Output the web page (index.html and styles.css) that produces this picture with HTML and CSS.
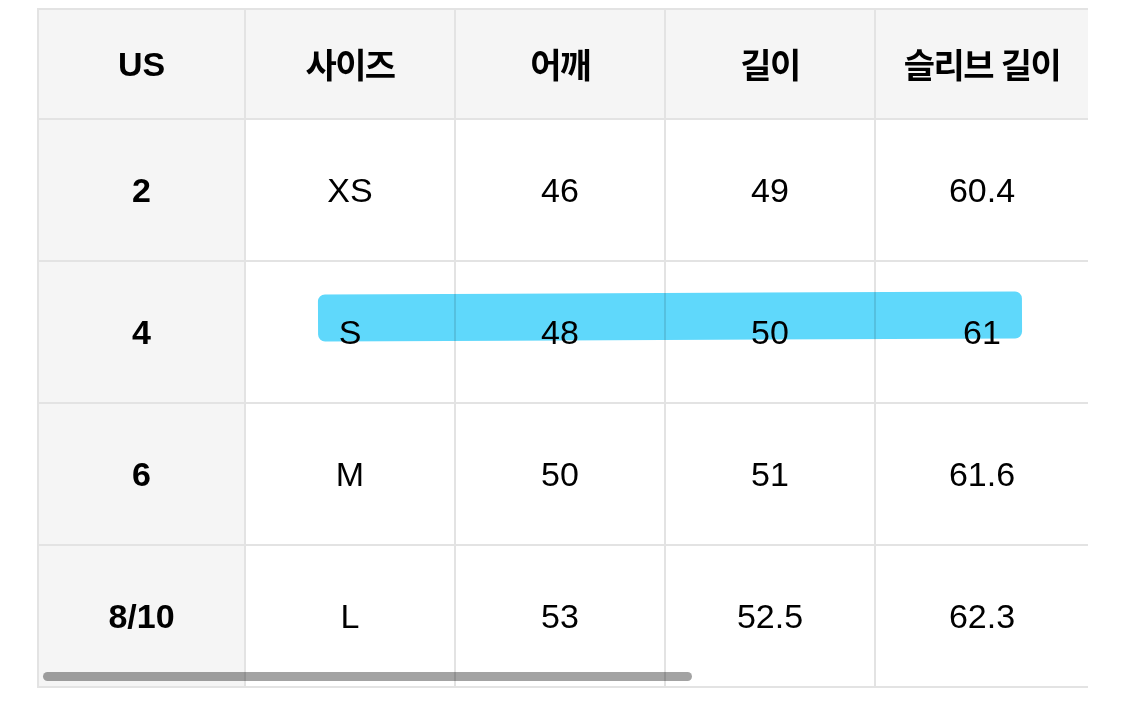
FILE: index.html
```html
<!DOCTYPE html>
<html lang="ko">
<head>
<meta charset="utf-8">
<title>사이즈 표</title>
<link rel="stylesheet" href="styles.css">
</head>
<body>
<div class="page">
  <div class="scroller">
    <div class="grid">
      <div class="cell head first">US</div>
      <div class="cell head"><span class="ko">사이즈</span></div>
      <div class="cell head"><span class="ko">어깨</span></div>
      <div class="cell head"><span class="ko">길이</span></div>
      <div class="cell head"><span class="ko">슬리브 길이</span></div>
      <div class="cell head"></div>
      <div class="cell head"></div>
      <div class="cell head"></div>

      <div class="cell first">2</div>
      <div class="cell">XS</div>
      <div class="cell">46</div>
      <div class="cell">49</div>
      <div class="cell">60.4</div>
      <div class="cell"></div>
      <div class="cell"></div>
      <div class="cell"></div>

      <div class="cell first">4</div>
      <div class="cell">S</div>
      <div class="cell">48</div>
      <div class="cell">50</div>
      <div class="cell">61</div>
      <div class="cell"></div>
      <div class="cell"></div>
      <div class="cell"></div>

      <div class="cell first">6</div>
      <div class="cell">M</div>
      <div class="cell">50</div>
      <div class="cell">51</div>
      <div class="cell">61.6</div>
      <div class="cell"></div>
      <div class="cell"></div>
      <div class="cell"></div>

      <div class="cell first">8/10</div>
      <div class="cell">L</div>
      <div class="cell">53</div>
      <div class="cell">52.5</div>
      <div class="cell">62.3</div>
      <div class="cell"></div>
      <div class="cell"></div>
      <div class="cell"></div>
    </div>
    <div class="thumb"></div>
  </div>
  <div class="marker"></div>
</div>
</body>
</html>
```

FILE: styles.css
```css
html, body {
  margin: 0;
  padding: 0;
  background: #ffffff;
}

body {
  font-family: "Liberation Sans", Arial, "Noto Sans CJK KR", sans-serif;
  color: #000000;
}

.page {
  position: relative;
  width: 1125px;
  height: 701px;
  padding: 8px 0 0 37px;
  box-sizing: border-box;
}

.scroller {
  position: relative;
  width: 1051px;
  overflow: hidden;
}

.grid {
  display: grid;
  grid-template-columns: 207px 210px 210px 210px 214px 210px 210px 210px;
  grid-template-rows: 110px repeat(4, 142px);
  width: max-content;
  border-left: 2px solid #e3e3e3;
  border-top: 2px solid #e3e3e3;
}

.cell {
  box-sizing: border-box;
  border-right: 2px solid #e3e3e3;
  border-bottom: 2px solid #e3e3e3;
  display: flex;
  align-items: center;
  justify-content: center;
  font-size: 34px;
  line-height: 1;
}

.head {
  background: #f5f5f5;
  font-weight: bold;
}

.first {
  background: #f5f5f5;
  font-weight: bold;
}

.ko {
  font-family: "Noto Sans CJK KR", sans-serif;
  font-size: 34px;
  font-weight: bold;
  letter-spacing: -1.6px;
}

.thumb {
  position: absolute;
  left: 6px;
  top: 664px;
  width: 649px;
  height: 9px;
  border-radius: 5px;
  background: rgba(0, 0, 0, 0.36);
}

.marker {
  position: absolute;
  left: 318px;
  top: 293px;
  width: 704px;
  height: 47px;
  border-radius: 7px;
  background: #5fd8fb;
  mix-blend-mode: multiply;
  transform: rotate(-0.25deg);
}
```
